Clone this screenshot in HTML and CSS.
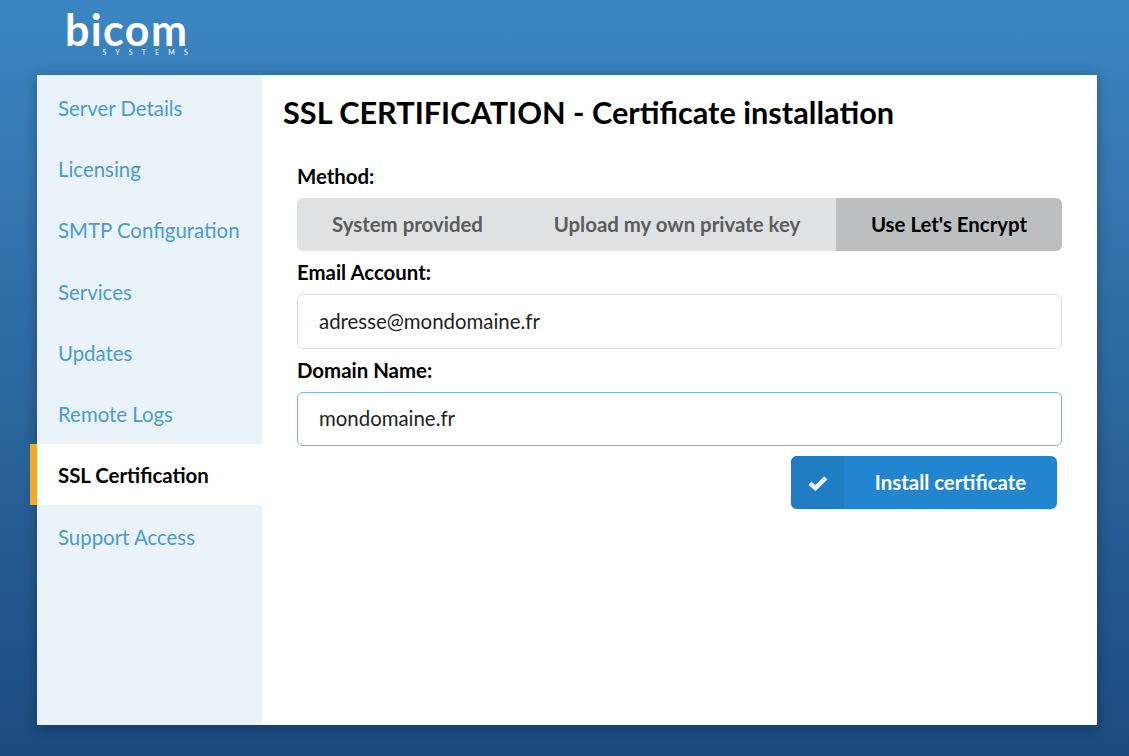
FILE: index.html
```html
<!DOCTYPE html>
<html lang="en">
<head>
    <meta charset="UTF-8">
    <meta name="viewport" content="width=device-width, initial-scale=1.0">
    <title>SSL Certification</title>
    <link rel="stylesheet" href="styles.css">
</head>
<body>

    <!-- Logo -->
    <header class="top-bar">
        <div class="logo">
            <div class="logo-name">bicom</div>
            <div class="logo-sub">SYSTEMS</div>
        </div>
    </header>

    <div class="panel">
        <!-- Side menu -->
        <nav class="side-menu">
            <a class="menu-item">Server Details</a>
            <a class="menu-item">Licensing</a>
            <a class="menu-item">SMTP Configuration</a>
            <a class="menu-item">Services</a>
            <a class="menu-item">Updates</a>
            <a class="menu-item">Remote Logs</a>
            <a class="menu-item active">SSL Certification</a>
            <a class="menu-item">Support Access</a>
        </nav>

        <!-- Certificate form -->
        <main class="content">
            <h1>SSL CERTIFICATION - Certificate installation</h1>
            <form class="cert-form">
                <label class="field-label">Method:</label>
                <div class="method-group">
                    <div class="method method-system">System provided</div>
                    <div class="method method-upload">Upload my own private key</div>
                    <div class="method method-encrypt active">Use Let's Encrypt</div>
                </div>

                <label class="field-label" for="email">Email Account:</label>
                <input class="text-input" type="text" id="email" value="adresse@mondomaine.fr">

                <label class="field-label" for="domain">Domain Name:</label>
                <input class="text-input focused" type="text" id="domain" value="mondomaine.fr">

                <div class="button-row">
                    <button type="button" class="install-btn">
                        <span class="btn-icon">
                            <svg width="20" height="16" viewBox="0 0 18 14">
                                <path d="M1.8 7.2 L6.8 11.6 L16 2.4" fill="none" stroke="#eef5fb" stroke-width="4"/>
                            </svg>
                        </span>
                        <span class="btn-text">Install certificate</span>
                    </button>
                </div>
            </form>
        </main>
    </div>

</body>
</html>
```

FILE: styles.css
```css
* {
    box-sizing: border-box;
}

html, body {
    height: 100%;
}

body {
    margin: 0;
    overflow: hidden;
    font-family: Lato, "Liberation Sans", sans-serif;
    background: linear-gradient(#3b86c2, #1c4a7f);
}

.top-bar {
    height: 75px;
    padding: 14px 0 0 65px;
}

.logo {
    width: 123px;
    color: white;
}

.logo-name {
    font-size: 43px;
    font-weight: 700;
    line-height: 31px;
    letter-spacing: 1.4px;
}

.logo-sub {
    margin-top: 3px;
    margin-right: -9px;
    font-size: 7px;
    line-height: 8px;
    letter-spacing: 9.2px;
    text-align: right;
}

.panel {
    display: flex;
    width: 1060px;
    height: 650px;
    margin-left: 37px;
    background: white;
    box-shadow: 0 2px 12px rgba(0, 0, 0, 0.3);
}

.side-menu {
    width: 225px;
    padding-top: 1px;
    background: #ebf3fa;
}

.menu-item {
    display: flex;
    align-items: center;
    height: 61.3px;
    padding: 2px 0 0 21px;
    font-size: 20.4px;
    color: #4a9bce;
}

.menu-item.active {
    margin-left: -7px;
    border-left: 7px solid #f9a825;
    background: white;
    color: black;
    font-weight: 700;
}

.content {
    flex: 1;
    padding: 0 35px 0 21px;
}

h1 {
    margin: 20px 0 0;
    font-size: 30.7px;
    line-height: 36px;
    font-weight: 700;
    color: black;
}

.cert-form {
    display: flex;
    flex-direction: column;
    margin: 34px 0 0 14px;
}

.field-label {
    height: 24px;
    margin-bottom: 9px;
    font-size: 20.4px;
    line-height: 22px;
    font-weight: 700;
    color: black;
}

.method-group {
    display: flex;
    height: 53px;
    margin-bottom: 10px;
    border-radius: 6px;
    overflow: hidden;
    background: #e0e1e3;
}

.method {
    display: flex;
    align-items: center;
    justify-content: center;
    padding-bottom: 2px;
    font-size: 20.4px;
    font-weight: 700;
    color: #5c5c5c;
}

.method-system {
    width: 221px;
}

.method-upload {
    width: 318px;
}

.method-encrypt {
    flex: 1;
}

.method.active {
    background: #bdbec0;
    color: black;
}

.text-input {
    height: 55px;
    margin-bottom: 10px;
    padding: 0 21px 2px;
    border: 1px solid #dcdfe2;
    border-radius: 6px;
    outline: none;
    font-family: inherit;
    font-size: 20.4px;
    color: #222;
}

.text-input.focused {
    height: 54px;
    border-color: #7fb2d9;
}

.button-row {
    display: flex;
    justify-content: flex-end;
    padding-right: 5px;
}

.install-btn {
    display: flex;
    width: 266px;
    height: 53px;
    padding: 0;
    border: none;
    border-radius: 6px;
    overflow: hidden;
    background: #2285d0;
    color: white;
    font-family: inherit;
    font-size: 20.4px;
    font-weight: 700;
}

.btn-icon {
    display: flex;
    align-items: center;
    justify-content: center;
    width: 53px;
    height: 100%;
    background: #1f7cc3;
}

.btn-text {
    display: flex;
    align-items: center;
    justify-content: center;
    flex: 1;
    height: 100%;
    padding-bottom: 2px;
}
```
